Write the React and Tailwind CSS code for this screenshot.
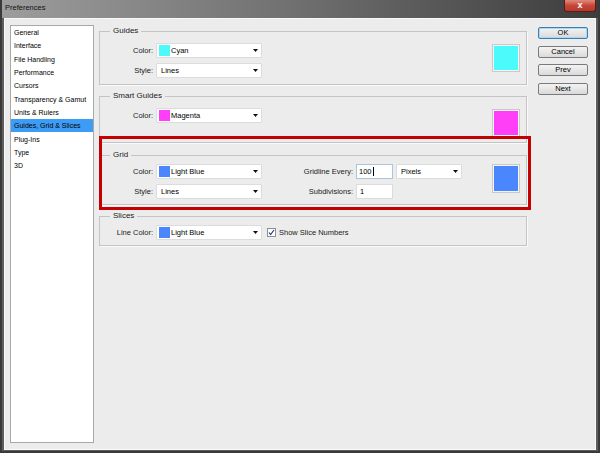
import React from 'react';

const Arrow = () => (
    <svg width="5" height="3" viewBox="0 0 5 3" className="shrink-0">
        <path d="M0 0h5L2.5 3z" fill="#111" />
    </svg>
);

const Dropdown = ({ color, text, w = 'w-[106px]' }) => (
    <div className={`${w} h-[15px] bg-white border border-[#dcdcdc] rounded-[1px] flex items-center ${color ? 'pl-[2px]' : 'pl-[4px]'} pr-[3px]`}>
        {color && <span className={`w-[11px] h-[11px] mr-[1px] shrink-0 ${color}`} />}
        <span className="flex-1 text-[7.5px] leading-none text-black">{text}</span>
        <Arrow />
    </div>
);

const Label = ({ children, w = 'w-[53px]' }) => (
    <span className={`${w} mr-[3px] text-right text-[7.5px] leading-none text-[#1a1a1a] shrink-0`}>{children}</span>
);

const Row = ({ label, children, lw }) => (
    <div className="flex items-center h-[15px]">
        <Label w={lw}>{label}</Label>
        {children}
    </div>
);

const Swatch = ({ color, h = 'h-[28px]', mt }) => (
    <div className={`ml-auto mr-[6px] ${mt} w-[28px] ${h} border border-[#c9c9c9] p-[1px] bg-[#f4f4f4]`}>
        <div className={`w-full h-full ${color}`} />
    </div>
);

const Group = ({ title, h, children }) => (
    <fieldset className={`${h} border border-[#c4c4c4] shadow-[1px_1px_0_#fafafa] m-0 p-0`}>
        <legend className="ml-[10px] px-[3px] text-[8px] leading-[10px] text-[#1a1a1a]">{title}</legend>
        {children}
    </fieldset>
);

const Btn = ({ children, ok }) => (
    <div className={`h-[12px] rounded-[2px] border ${ok ? 'border-[#3c7fb1] shadow-[inset_0_0_0_1px_#a8d8f5]' : 'border-[#7a7a7a]'} bg-gradient-to-b from-[#f3f3f3] to-[#dadada] flex items-center justify-center text-[7.5px] leading-none text-black`}>
        {children}
    </div>
);

const items = ['General', 'Interface', 'File Handling', 'Performance', 'Cursors', 'Transparency & Gamut', 'Units & Rulers', 'Guides, Grid & Slices', 'Plug-Ins', 'Type', '3D'];

export default function App() {
    return (
        <div className="w-[600px] h-[453px] flex flex-col bg-[#5e5e5e] border-l-2 border-r-2 border-b-2 border-[#3a3a3a] font-['Liberation_Sans',Arial,sans-serif] overflow-hidden">
            {/* title bar */}
            <div className="h-[18px] shrink-0 flex items-start justify-between bg-gradient-to-r from-[#9d9d9d] via-[#6f6f6f] to-[#3d3d3d] -mx-[2px]">
                <span className="pl-[5px] pt-[4px] text-[7.5px] leading-none text-[#111]">Preferences</span>
                <div className="mr-[4px] w-[32px] h-[12px] rounded-b-[3px] border border-t-0 border-[#5a1d14] bg-gradient-to-b from-[#e08a7c] via-[#c7463a] to-[#b8362a] flex items-center justify-center">
                    <span className="text-white text-[9px] font-bold leading-none -mt-[1px]">x</span>
                </div>
            </div>

            <div className="flex-1 mx-[2px] mb-[1px] bg-[#ececec] border border-[#f8f8f8] flex items-start">
                {/* category list */}
                <div className="ml-[5px] mt-[6px] w-[84px] h-[418px] bg-white border border-[#a9a9a9] shrink-0">
                    {items.map((it) => (
                        <div key={it} className={`h-[13.3px] flex items-center pl-[3px] text-[7px] leading-none text-black ${it === 'Guides, Grid & Slices' ? 'bg-[#3d9cf5]' : ''}`}>
                            {it}
                        </div>
                    ))}
                </div>

                {/* panels */}
                <div className="relative ml-[5px] mt-[7px] w-[428px] flex flex-col shrink-0">
                    <Group title="Guides" h="h-[59px]">
                        <div className="flex items-start">
                            <div className="mt-[7px] flex flex-col gap-[5px]">
                                <Row label="Color:"><Dropdown color="bg-[#4cf9fb]" text="Cyan" /></Row>
                                <Row label="Style:"><Dropdown text="Lines" /></Row>
                            </div>
                            <Swatch color="bg-[#4cf9fb]" mt="mt-[8px]" />
                        </div>
                    </Group>

                    <div className="mt-[6px]">
                        <Group title="Smart Guides" h="h-[52px]">
                            <div className="flex items-start">
                                <div className="mt-[7px]">
                                    <Row label="Color:"><Dropdown color="bg-[#ff3ef8]" text="Magenta" /></Row>
                                </div>
                                <Swatch color="bg-[#ff3ef8]" mt="mt-[8px]" />
                            </div>
                        </Group>
                    </div>

                    <div className="mt-[7px]">
                        <Group title="Grid" h="h-[55px]">
                            <div className="flex items-start">
                                <div className="mt-[4px] flex flex-col gap-[5px]">
                                    <Row label="Color:"><Dropdown color="bg-[#4a86fd]" text="Light Blue" /></Row>
                                    <Row label="Style:"><Dropdown text="Lines" /></Row>
                                </div>
                                <div className="mt-[4px] flex flex-col gap-[5px]">
                                    <Row label="Gridline Every:" lw="w-[91px]">
                                        <div className="w-[37px] h-[15px] bg-white border border-[#a9c6e0] flex items-center pl-[2px] text-[7.5px] leading-none text-black">
                                            100<span className="w-px h-[9px] bg-black ml-[1px]" />
                                        </div>
                                        <div className="ml-[3px]"><Dropdown text="Pixels" w="w-[66px]" /></div>
                                    </Row>
                                    <Row label="Subdivisions:" lw="w-[91px]">
                                        <div className="w-[37px] h-[15px] bg-white border border-[#dcdcdc] flex items-center pl-[3px] text-[7.5px] leading-none text-black">1</div>
                                    </Row>
                                </div>
                                <Swatch color="bg-[#4a86fd]" h="h-[29px]" mt="mt-[4px]" />
                            </div>
                        </Group>
                    </div>

                    <div className="mt-[6px]">
                        <Group title="Slices" h="h-[35px]">
                            <div className="mt-[4px] flex items-center">
                                <Row label="Line Color:"><Dropdown color="bg-[#4a86fd]" text="Light Blue" /></Row>
                                <span className="ml-[5px] w-[9px] h-[9px] bg-white border border-[#8e8f8f] flex items-center justify-center">
                                    <svg width="7" height="7" viewBox="0 0 7 7"><path d="M1 3.5l1.6 2L6 1" fill="none" stroke="#1b3d80" strokeWidth="1.2" /></svg>
                                </span>
                                <span className="ml-[3px] text-[7.5px] leading-none text-[#1a1a1a]">Show Slice Numbers</span>
                            </div>
                        </Group>
                    </div>

                    {/* highlight annotation */}
                    <div className="absolute left-0 top-[110px] w-[432px] h-[74px] border-[3px] border-[#c40000] pointer-events-none" />
                </div>

                {/* buttons */}
                <div className="ml-[11px] mt-[8px] w-[50px] flex flex-col gap-[6.5px] shrink-0">
                    <Btn ok>OK</Btn>
                    <Btn>Cancel</Btn>
                    <Btn>Prev</Btn>
                    <Btn>Next</Btn>
                </div>
            </div>
        </div>
    );
}
